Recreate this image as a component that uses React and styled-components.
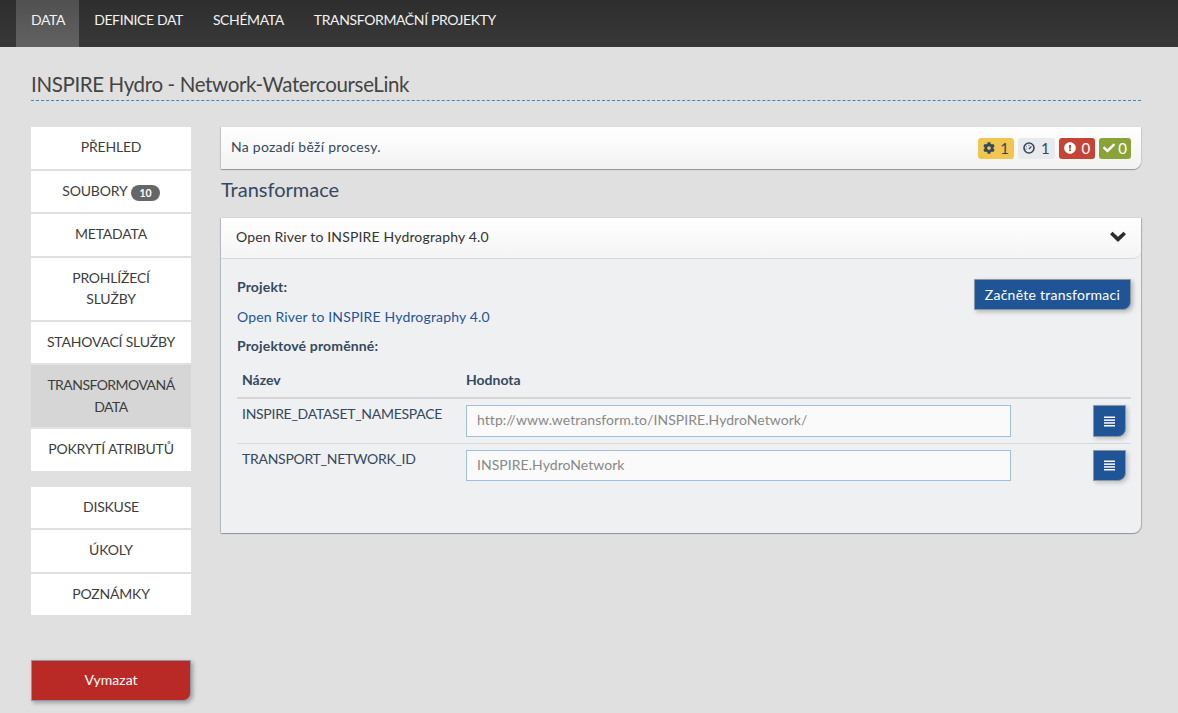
import React from 'react';
import styled, { createGlobalStyle } from 'styled-components';
import { FaCog, FaExclamationCircle, FaCheck } from 'react-icons/fa';

const Global = createGlobalStyle`
  html, body { margin: 0; padding: 0; background: #e0e0e0; }
  body { font-family: "Lato", "Liberation Sans", sans-serif; font-size: 14px; color: #34495e; height: 713px; overflow: hidden; }
  * { box-sizing: border-box; }
`;

const NavBar = styled.nav`
  height: 47px; padding-left: 16px; display: flex;
  background: linear-gradient(#2e2e2e, #383838);
`;
const NavItem = styled.a`
  display: flex; align-items: center; height: 100%; padding: 0 ${p => p.$active ? 14 : 15}px 8px 15px;
  color: #f2f2f2; font-size: 14px; letter-spacing: -0.38px; text-transform: uppercase;
  background: ${p => p.$active ? 'linear-gradient(#505050, #626262)' : 'transparent'};
`;
const Page = styled.div`
  padding: 0 37px 0 31px;
`;
const Title = styled.h1`
  margin: 24px 0 0; height: 29px; border-bottom: 1px dashed #3a85cc;
  font-size: 20.5px; line-height: 26px; font-weight: 400; color: #444; letter-spacing: -0.36px;
  box-sizing: content-box;
`;
const Columns = styled.div`
  display: flex; gap: 30px; margin-top: 26px; align-items: flex-start;
`;
const Side = styled.aside`
  width: 160px; flex: none; display: flex; flex-direction: column;
`;
const SideGroup = styled.div`
  display: flex; flex-direction: column; gap: 2px; margin-bottom: 16px;
`;
const SideItem = styled.a`
  display: block; padding: 9px 8px 10px; min-height: 41.5px; background: ${p => p.$active ? '#d6d6d6' : '#fff'};
  text-align: center; font-size: 14px; line-height: 21.5px; color: #3d3d3d; text-transform: uppercase;
  letter-spacing: ${p => p.$active ? -0.55 : -0.2}px;
`;
const Count = styled.span`
  display: inline-block; margin-left: 4px; padding: 0 8px; height: 16px; border-radius: 8px;
  background: #666; color: #fff; font-size: 10.5px; line-height: 16px; font-weight: 700; vertical-align: -1px; letter-spacing: 0;
`;
const DeleteButton = styled.button`
  margin-top: 29px; width: 160px; height: 41px; background: #b92926; color: #fff; font: inherit; font-size: 14px;
  border: 1px solid #8b98a3; border-radius: 0 0 8px 0; box-shadow: 2px 2px 4px rgba(0,0,0,.3); padding: 0 0 3px;
`;
const Main = styled.main`
  flex: 1; min-width: 0;
`;
const Alert = styled.div`
  height: 42px; display: flex; align-items: center; justify-content: space-between; padding: 0 10px;
  background: linear-gradient(#fff, #f2f2f2); border-radius: 0 0 8px 0;
  box-shadow: 0 1px 1px #8a949c, 1px 0 1px rgba(0,0,0,.08), -1px 0 1px rgba(0,0,0,.12);
`;
const AlertText = styled.span`
  letter-spacing: 0.26px; padding-bottom: 3px;
`;
const Badges = styled.div`
  display: flex; gap: 4px;
`;
const Badge = styled.span`
  display: inline-flex; align-items: center; gap: ${p => p.$gap}px; height: 21px; padding: 0 ${p => p.$pad}px; border-radius: 3px;
  font-size: 15px; letter-spacing: 0; background: ${p => p.$bg}; color: ${p => p.$fg};
  svg { width: 12px; height: 12px; }
`;
const Heading = styled.h2`
  margin: 9px 0 18px; font-size: 20px; line-height: 22px; font-weight: 400; color: #34495e;
`;
const Panel = styled.section`
  height: 315px; background: #eff0f2; border-radius: 0 0 8px 0;
  box-shadow: 0 1px 1px #8a949c, 1px 0 1px #aab1b7, -1px 0 1px #b5bbc1;
`;
const PanelHead = styled.div`
  height: 41px; display: flex; align-items: center; justify-content: space-between; padding: 0 15px 3px;
  background: linear-gradient(#fff, #f4f4f4); border-radius: 0 0 8px 0; border-bottom: 1px solid #d8d8d8;
  color: #333; font-size: 14px; letter-spacing: 0.16px;
`;
const PanelBody = styled.div`
  padding: 18px 10px 0 16px;
`;
const TopRow = styled.div`
  display: flex; justify-content: space-between; align-items: flex-start;
`;
const Label = styled.div`
  font-weight: 700; line-height: 20px; margin-bottom: ${p => p.$mb || 0}px; color: #34495e; letter-spacing: 0.15px;
`;
const ProjectLink = styled.a`
  display: block; line-height: 20px; color: #1f5596; margin-bottom: 9px; letter-spacing: 0.16px;
`;
const StartButton = styled.button`
  height: 31px; margin-top: 2px; padding: 0 10px; background: #1f5596; color: #fff; font: inherit; font-size: 14px; letter-spacing: 0.25px;
  border: 1px solid #8b98a3; border-radius: 0 0 8px 0; box-shadow: 2px 2px 4px rgba(0,0,0,.25);
`;
const VarsTable = styled.div`
  margin-top: 13px;
`;
const Row = styled.div`
  display: grid; grid-template-columns: 224px 545px 1fr; padding: 0 5px;
  border-bottom: ${p => p.$head ? '2px solid #d6d6d6' : p.$last ? '0' : '1px solid #d8d8d8'};
  height: ${p => p.$head ? 30 : 45}px;
`;
const HeadCell = styled.div`
  font-weight: 700; line-height: 20px; padding-top: 1px;
`;
const NameCell = styled.div`
  padding-top: 5px; line-height: 20px; color: #34495e; letter-spacing: -0.28px;
`;
const ValueCell = styled.div`
  padding-top: 6px;
`;
const ValueInput = styled.div`
  height: ${p => p.$short ? 31 : 32}px; border: 1px solid #9dc0e0; background: #fafafa; color: #888;
  padding: 0 10px 3px; display: flex; align-items: center; font-size: 14px; letter-spacing: 0.05px;
`;
const ActionCell = styled.div`
  padding-top: 6px; display: flex; justify-content: flex-end;
`;
const MenuButton = styled.button`
  width: 33px; height: ${p => p.$short ? 31 : 32}px; padding: 0; background: #1f5596; display: flex; align-items: center; justify-content: center;
  border: 1px solid #8b98a3; border-radius: 0 0 8px 0; box-shadow: 2px 2px 4px rgba(0,0,0,.2);
`;

const Lines = () => (
  <svg width="11" height="11" viewBox="0 0 11 11" fill="#fff">
    <rect y="0.5" width="11" height="1.5" /><rect y="3.4" width="11" height="1.5" /><rect y="6.2" width="11" height="1.5" /><rect y="9" width="11" height="1.5" />
  </svg>
);
const Chevron = () => (
  <svg width="16" height="11" viewBox="0 0 16 11" fill="none" stroke="#2b2b2b" strokeWidth="3.6">
    <path d="M1.3 2l6.7 6.4 6.7-6.4" />
  </svg>
);
const Dashboard = () => (
  <svg viewBox="0 0 12 12" fill="none" stroke="currentColor">
    <circle cx="6" cy="6" r="5" strokeWidth="1.6" />
    <path d="M6 7l2.4-2.6" strokeWidth="1.3" />
    <path d="M6 2.8v1M3 4.2l.7.6M2.6 7h1" strokeWidth="1" />
  </svg>
);

export default function App() {
  return (
    <>
      <Global />
      <NavBar>
        <NavItem $active>Data</NavItem>
        <NavItem>Definice dat</NavItem>
        <NavItem>Schémata</NavItem>
        <NavItem>Transformační projekty</NavItem>
      </NavBar>
      <Page>
        <Title>INSPIRE Hydro - Network-WatercourseLink</Title>
        <Columns>
          <Side>
            <SideGroup>
              <SideItem>Přehled</SideItem>
              <SideItem>Soubory<Count>10</Count></SideItem>
              <SideItem>Metadata</SideItem>
              <SideItem>Prohlížecí<br />služby</SideItem>
              <SideItem>Stahovací služby</SideItem>
              <SideItem $active>Transformovaná<br />data</SideItem>
              <SideItem>Pokrytí atributů</SideItem>
            </SideGroup>
            <SideGroup>
              <SideItem>Diskuse</SideItem>
              <SideItem>Úkoly</SideItem>
              <SideItem>Poznámky</SideItem>
            </SideGroup>
            <DeleteButton>Vymazat</DeleteButton>
          </Side>
          <Main>
            <Alert>
              <AlertText>Na pozadí běží procesy.</AlertText>
              <Badges>
                <Badge $pad={5} $gap={5} $bg="#f0c550" $fg="#34495e"><FaCog />1</Badge>
                <Badge $pad={5} $gap={6} $bg="#e8eaec" $fg="#34495e"><Dashboard />1</Badge>
                <Badge $pad={5} $gap={6} $bg="#c44536" $fg="#fff"><FaExclamationCircle />0</Badge>
                <Badge $pad={4} $gap={3} $bg="#8aa338" $fg="#fff"><FaCheck />0</Badge>
              </Badges>
            </Alert>
            <Heading>Transformace</Heading>
            <Panel>
              <PanelHead>
                <span>Open River to INSPIRE Hydrography 4.0</span>
                <Chevron />
              </PanelHead>
              <PanelBody>
                <TopRow>
                  <div>
                    <Label $mb={10}>Projekt:</Label>
                    <ProjectLink>Open River to INSPIRE Hydrography 4.0</ProjectLink>
                    <Label>Projektové proměnné:</Label>
                  </div>
                  <StartButton>Začněte transformaci</StartButton>
                </TopRow>
                <VarsTable>
                  <Row $head>
                    <HeadCell>Název</HeadCell>
                    <HeadCell>Hodnota</HeadCell>
                    <div />
                  </Row>
                  <Row>
                    <NameCell>INSPIRE_DATASET_NAMESPACE</NameCell>
                    <ValueCell><ValueInput>http://www.wetransform.to/INSPIRE.HydroNetwork/</ValueInput></ValueCell>
                    <ActionCell><MenuButton><Lines /></MenuButton></ActionCell>
                  </Row>
                  <Row $last>
                    <NameCell>TRANSPORT_NETWORK_ID</NameCell>
                    <ValueCell><ValueInput $short>INSPIRE.HydroNetwork</ValueInput></ValueCell>
                    <ActionCell><MenuButton $short><Lines /></MenuButton></ActionCell>
                  </Row>
                </VarsTable>
              </PanelBody>
            </Panel>
          </Main>
        </Columns>
      </Page>
    </>
  );
}
